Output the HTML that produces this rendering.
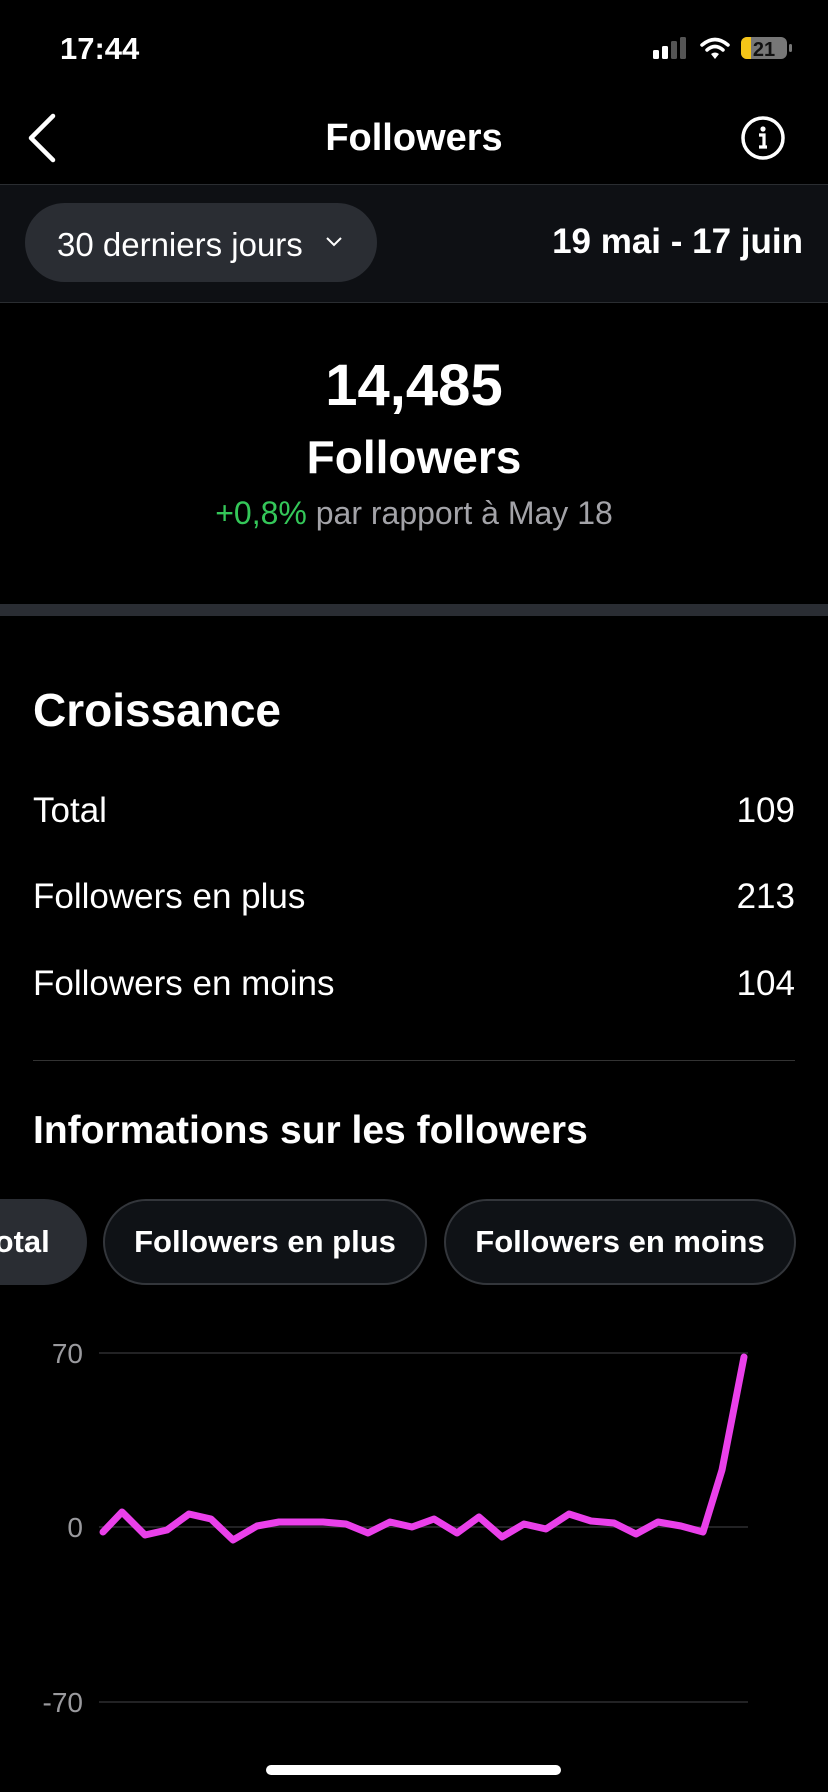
<!DOCTYPE html>
<html><head><meta charset="utf-8"><style>
*{margin:0;padding:0;box-sizing:border-box}
body{width:828px;height:1792px;background:#000;color:#fff;font-family:"Liberation Sans",sans-serif;position:relative;overflow:hidden}
.a{position:absolute;white-space:nowrap}
</style></head><body>
<div class="a" style="left:60px;top:31px;font-size:31px;font-weight:600">17:44</div>
<svg class="a" style="left:650px;top:34px" width="150" height="30" viewBox="0 0 150 30">
<rect x="3" y="16" width="6" height="9" rx="1.5" fill="#fff"/>
<rect x="12" y="12" width="6" height="13" rx="1.5" fill="#fff"/>
<rect x="21" y="7" width="6" height="18" rx="1.5" fill="#555"/>
<rect x="30" y="3" width="6" height="22" rx="1.5" fill="#555"/>
<path d="M52 11 Q65 0 78 11" stroke="#fff" stroke-width="3.5" fill="none" stroke-linecap="round"/>
<path d="M57 16 Q65 9 73 16" stroke="#fff" stroke-width="3.5" fill="none" stroke-linecap="round"/>
<path d="M61 20 L65 25 L69 20 Q65 17 61 20Z" fill="#fff"/>
<rect x="91" y="3" width="46" height="22" rx="6" fill="#777"/>
<path d="M97 3 h4 v22 h-4 a6 6 0 0 1 -6 -6 v-10 a6 6 0 0 1 6 -6z" fill="#f5c518"/>
<rect x="139" y="10" width="3" height="8" rx="1.5" fill="#777"/>
<text x="114" y="22" font-size="20" font-weight="700" fill="#111" text-anchor="middle" font-family="Liberation Sans">21</text>
</svg>
<svg class="a" style="left:24px;top:112px" width="36" height="52"><path d="M29 4 L7 26 L29 48" stroke="#fff" stroke-width="4.5" fill="none" stroke-linecap="round" stroke-linejoin="round"/></svg>
<div class="a" style="left:0;width:828px;text-align:center;top:117px;font-size:38px;font-weight:700">Followers</div>
<svg class="a" style="left:740px;top:115px" width="46" height="46"><circle cx="23" cy="23" r="20" stroke="#fff" stroke-width="3.5" fill="none"/><circle cx="23" cy="14" r="2.6" fill="#fff"/><path d="M19 20 h5 v12 M19 32 h8" stroke="#fff" stroke-width="3.2" fill="none"/></svg>
<div class="a" style="left:0;top:184px;width:828px;height:119px;background:#0e1014;border-top:1px solid #2a2d31;border-bottom:1px solid #2a2d31"></div>
<div class="a" style="left:25px;top:203px;width:352px;height:79px;border-radius:40px;background:#2a2d33"></div>
<div class="a" style="left:57px;top:226px;font-size:33px;font-weight:500">30 derniers jours</div>
<svg class="a" style="left:324px;top:235px" width="20" height="14"><path d="M3 3 L10 10 L17 3" stroke="#fff" stroke-width="2" fill="none"/></svg>
<div class="a" style="right:25px;top:222px;font-size:35px;font-weight:700">19 mai - 17 juin</div>
<div class="a" style="left:0;width:828px;text-align:center;top:352px;font-size:58px;font-weight:600">14,485</div>
<div class="a" style="left:0;width:828px;text-align:center;top:430px;font-size:46px;font-weight:700">Followers</div>
<div class="a" style="left:0;width:828px;text-align:center;top:495px;font-size:32px;color:#a3a3a8"><span style="color:#34c759">+0,8%</span> par rapport à May 18</div>
<div class="a" style="left:0;top:604px;width:828px;height:12px;background:#2a2d33"></div>
<div class="a" style="left:33px;top:683px;font-size:46px;font-weight:700">Croissance</div>
<div class="a" style="left:33px;top:791px;font-size:35px">Total</div><div class="a" style="right:33px;top:791px;font-size:35px">109</div>
<div class="a" style="left:33px;top:877px;font-size:35px">Followers en plus</div><div class="a" style="right:33px;top:877px;font-size:35px">213</div>
<div class="a" style="left:33px;top:964px;font-size:35px">Followers en moins</div><div class="a" style="right:33px;top:964px;font-size:35px">104</div>
<div class="a" style="left:33px;top:1060px;width:762px;height:1px;background:#333"></div>
<div class="a" style="left:33px;top:1109px;font-size:39px;font-weight:700">Informations sur les followers</div>
<div class="a" style="left:-60px;top:1199px;width:147px;height:86px;border-radius:43px;background:#2a2d33"></div>
<div class="a" style="left:-22px;top:1224px;font-size:31px;font-weight:600">Total</div>
<div class="a" style="left:103px;top:1199px;width:324px;height:86px;border-radius:43px;background:#0f1216;border:2px solid #33363b;text-align:center;line-height:82px;font-size:31px;font-weight:600">Followers en plus</div>
<div class="a" style="left:444px;top:1199px;width:352px;height:86px;border-radius:43px;background:#0f1216;border:2px solid #33363b;text-align:center;line-height:82px;font-size:31px;font-weight:600">Followers en moins</div>
<svg class="a" style="left:0;top:1330px" width="828" height="400">
<g stroke="#2e2e30" stroke-width="1.5"><line x1="99" y1="23" x2="748" y2="23"/><line x1="99" y1="197" x2="748" y2="197"/><line x1="99" y1="372" x2="748" y2="372"/></g>
<g fill="#9a9a9e" font-size="28" font-family="Liberation Sans" text-anchor="end"><text x="83" y="33">70</text><text x="83" y="207">0</text><text x="83" y="382">-70</text></g>
<polyline transform="translate(0,-1330)" fill="none" stroke="#ea40ea" stroke-width="7" stroke-linejoin="round" stroke-linecap="round" points="103,1532 122,1512 145,1535 167,1530 189,1514 211,1519 233,1540 257,1526 279,1522 323,1522 346,1524 368,1533 390,1522 412,1527 434,1519 457,1533 479,1517 502,1537 524,1524 546,1529 569,1514 591,1521 614,1523 636,1534 658,1522 681,1526 703,1532 722,1470 744,1357"/>
</svg>
<div class="a" style="left:266px;top:1765px;width:295px;height:10px;border-radius:5px;background:#fff"></div>
</body></html>
